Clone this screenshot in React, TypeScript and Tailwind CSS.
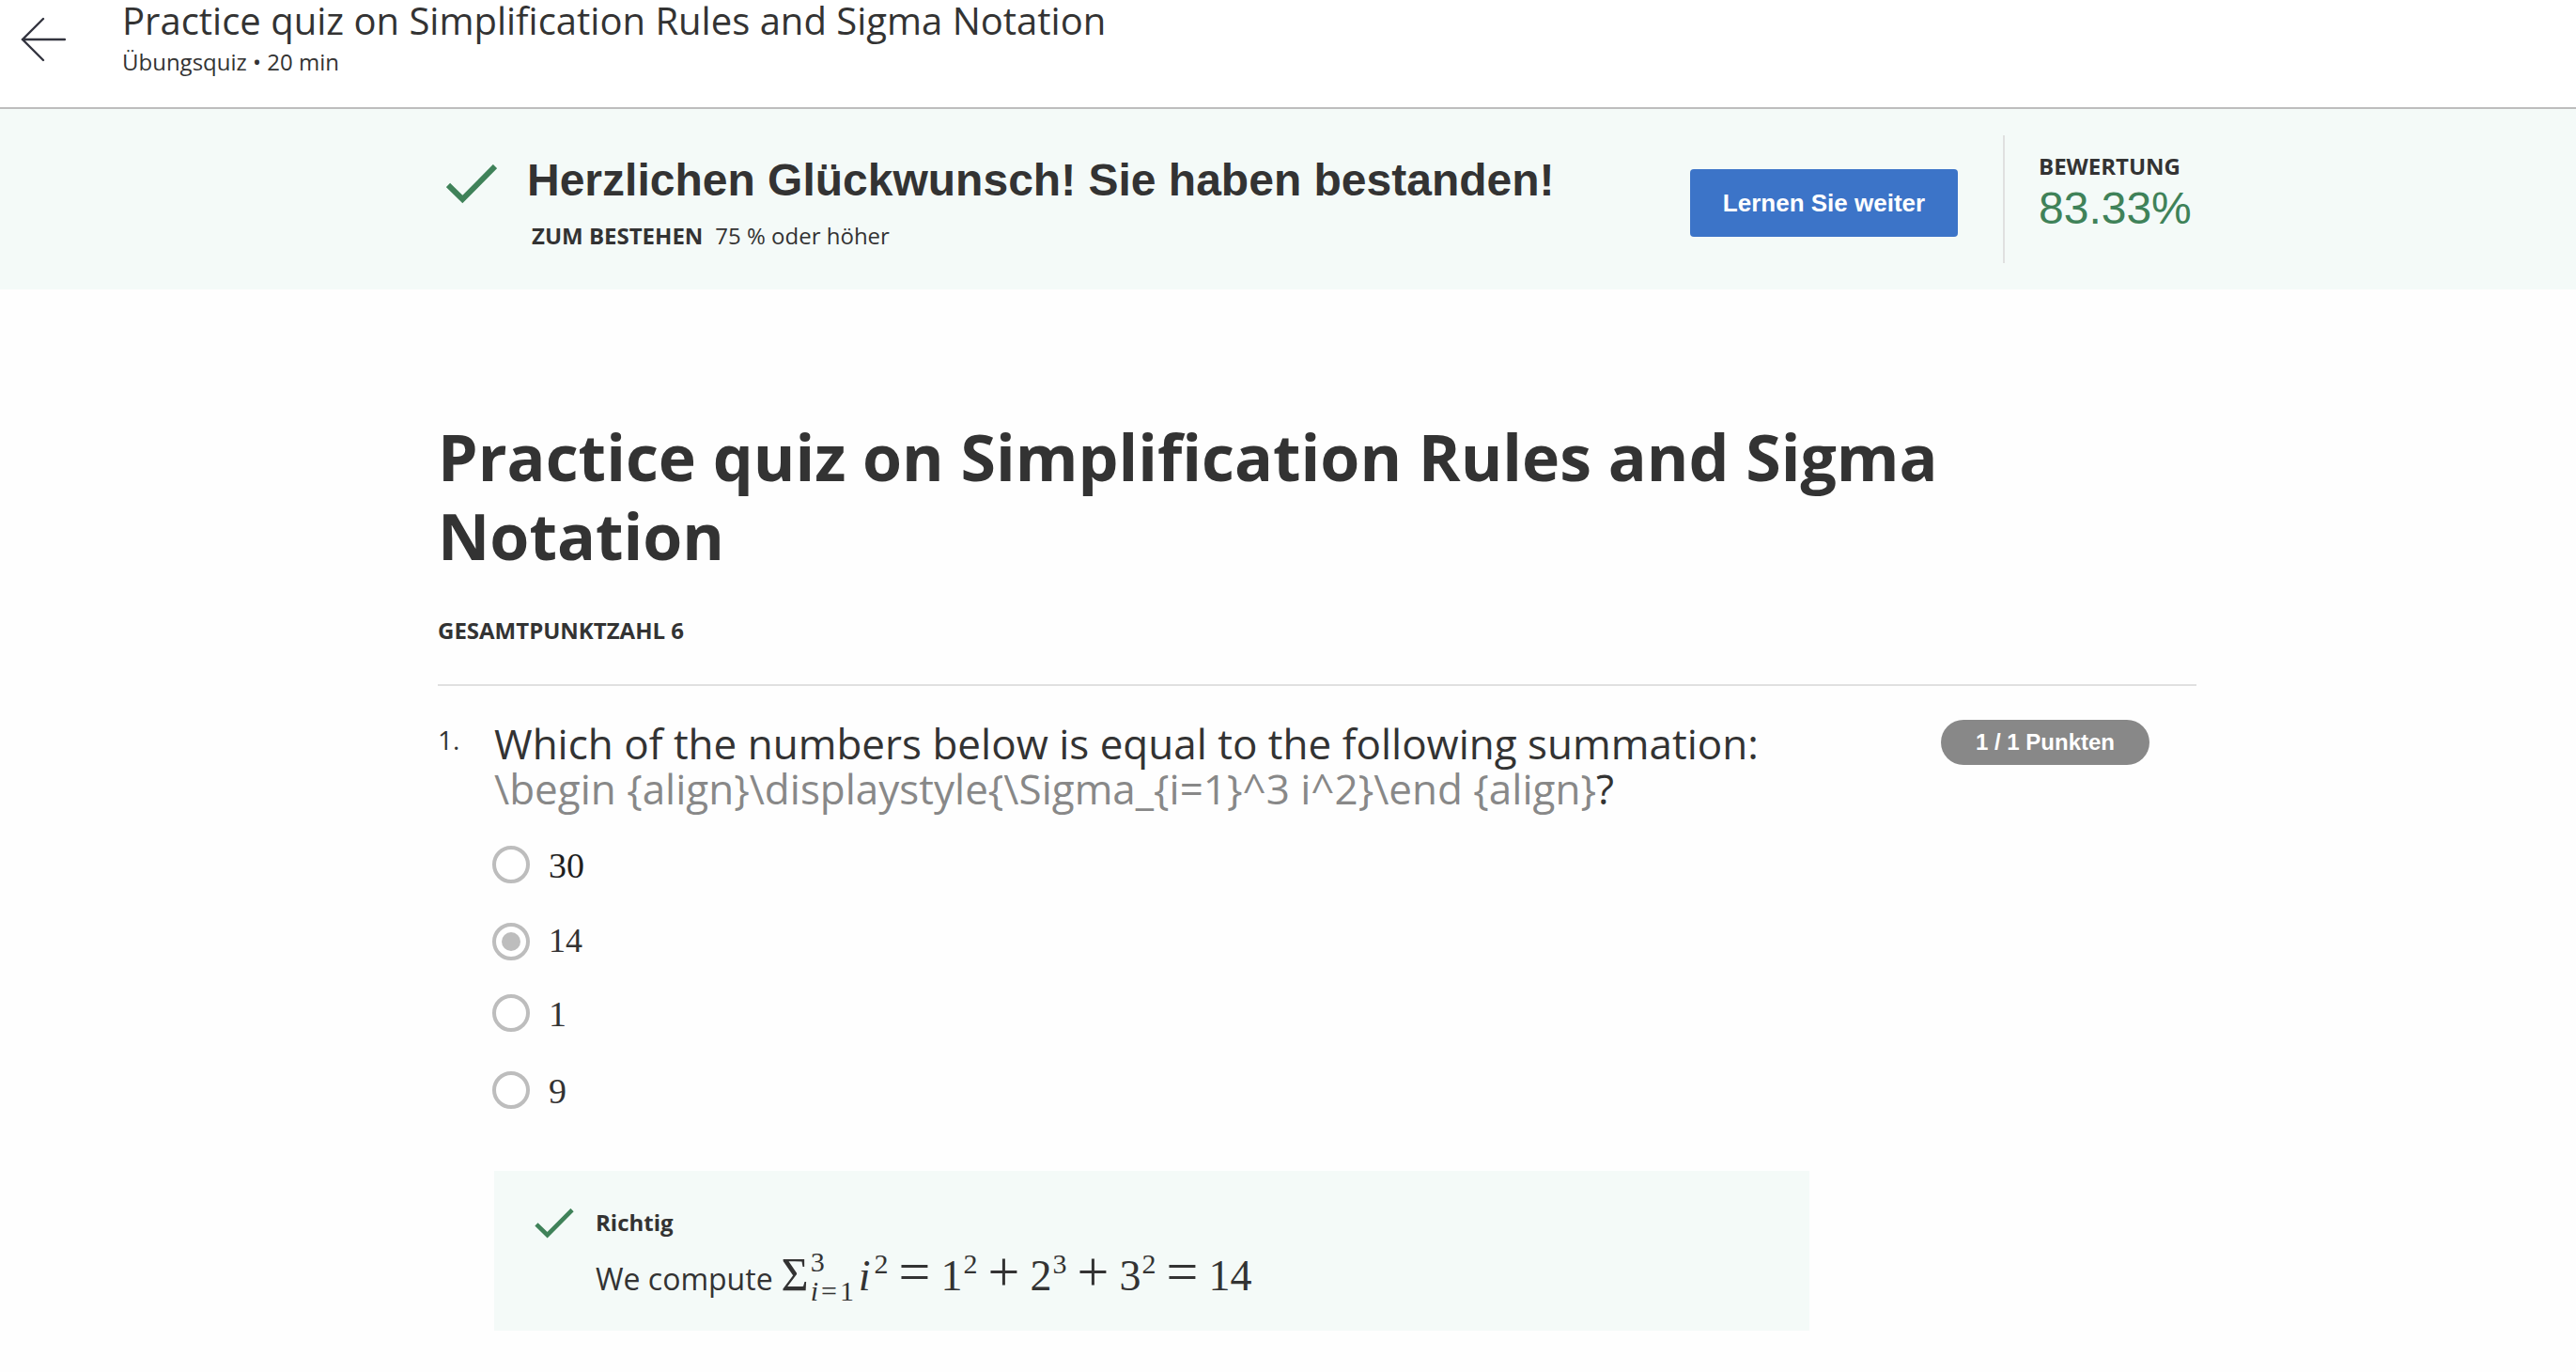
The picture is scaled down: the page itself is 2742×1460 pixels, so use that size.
import React from "react";

function Check({ className }: { className: string }) {
  return (
    <svg viewBox="0 0 54 42" className={className} fill="none" aria-hidden="true">
      <path d="M2 22 L17.3 37 L52 2" stroke="#3f8259" strokeWidth="6" />
    </svg>
  );
}

const options = [
  { value: "30", row: "h-[82px]", text: "text-[38px] leading-[42px] text-[#1f1f1f]" },
  { value: "14", row: "h-[76px]", text: "text-[36px] leading-[38px]" },
  { value: "1", row: "h-[82px]", text: "text-[38px] leading-[42px]" },
  { value: "9", row: "h-[82px]", text: "text-[38px] leading-[42px]" },
];

function Power({ base, exponent }: { base: string; exponent: string }) {
  return (
    <>
      {base}
      <span className="ml-px align-[18px] text-[30px] leading-none">{exponent}</span>
    </>
  );
}

function Operator({ sign }: { sign: string }) {
  return <span className="inline-block w-14 text-center text-[60px] leading-none">{sign}</span>;
}

function Formula() {
  return (
    <span className="ml-[9px] font-['Liberation_Serif',serif] text-[46px] leading-[48px]">
      <span className="text-[50px] leading-none">Σ</span>
      <span className="ml-0.5 inline-flex w-[51px] flex-col align-[20px] text-[30px] leading-[31px]">
        <span>3</span>
        <span>
          <i>i</i>
          <span className="px-[3px]">=</span>1
        </span>
      </span>
      <i className="mr-1">i</i>
      <span className="align-[18px] text-[30px] leading-none">2</span>
      <Operator sign="=" />
      <Power base="1" exponent="2" />
      <Operator sign="+" />
      <Power base="2" exponent="3" />
      <Operator sign="+" />
      <Power base="3" exponent="2" />
      <Operator sign="=" />
      14
    </span>
  );
}

export default function App() {
  return (
    <div className="min-h-screen bg-[#fefefe] font-['Open_Sans',sans-serif] text-[#333333]">
      <header className="flex h-[116px] border-b-2 border-[#bdbdbd] bg-white">
        <button aria-label="Zurück" className="flex w-[130px] items-start pt-[18px] pl-[22px]">
          <svg viewBox="0 0 48 48" className="h-12 w-12" fill="none" aria-hidden="true">
            <path d="M24 2 L2 24 L24 46 M2 24 H47" stroke="#33343f" strokeWidth="2.4" strokeLinecap="round" />
          </svg>
        </button>
        <div>
          <p className="text-[40px] leading-[44px]">Practice quiz on Simplification Rules and Sigma Notation</p>
          <p className="mt-1 text-[24px] leading-[36px]">Übungsquiz • 20 min</p>
        </div>
      </header>

      <section className="flex h-[192px] items-start bg-[#f4faf8] pr-[404px] pl-[475px]">
        <Check className="mt-[59px] h-[42px] w-[54px]" />
        <div className="ml-8 grow pt-[46px]">
          <h2 className="font-['Liberation_Sans',sans-serif] text-[48px] leading-[60px] font-bold whitespace-nowrap">
            Herzlichen Glückwunsch! Sie haben bestanden!
          </h2>
          <p className="mt-[11px] ml-[5px] text-[24px] leading-[36px]">
            <strong className="mr-[13px] font-bold">ZUM BESTEHEN</strong>75 % oder höher
          </p>
        </div>
        <button className="mt-16 h-[72px] w-[285px] rounded bg-[#3c74c8] font-['Liberation_Sans',sans-serif] text-[26px] font-bold text-white">
          Lernen Sie weiter
        </button>
        <div className="mt-7 ml-12 h-[136px] w-[206px] border-l-2 border-[#e0e0e0] pt-[15px] pl-9">
          <p className="text-[24px] leading-[36px] font-bold">BEWERTUNG</p>
          <p className="font-['Liberation_Sans',sans-serif] text-[48px] leading-[54px] text-[#3f8259]">83.33%</p>
        </div>
      </section>

      <main className="pr-[404px] pl-[466px]">
        <h1 className="max-w-[1640px] pt-[136px] text-[68px] leading-[84px] font-bold">
          Practice quiz on Simplification Rules and Sigma Notation
        </h1>
        <p className="mt-[41px] text-[24px] leading-[36px] font-bold">GESAMTPUNKTZAHL 6</p>
        <div className="mt-[39px] grid grid-cols-[60px_1400px_1fr] border-t-2 border-[#e0e0e0] pt-9">
          <span className="pt-[3px] text-[28px] leading-[36px]">1.</span>
          <div className="pt-px">
            <p className="text-[44px] leading-[48px]">
              Which of the numbers below is equal to the following summation:
              <br />
              <span className="text-[#888888]">{"\\begin {align}\\displaystyle{\\Sigma_{i=1}^3 i^2}\\end {align}"}</span>?
            </p>
            <div className="-ml-0.5 pt-[37px]">
              {options.map((o) => (
                <label key={o.value} className={"flex items-start gap-5 " + o.row}>
                  <input
                    type="radio"
                    name="answer"
                    defaultChecked={o.value === "14"}
                    className="grid size-10 appearance-none place-items-center rounded-full border-4 border-[#bdbdbd] bg-white before:size-5 before:rounded-full checked:before:bg-[#bdbdbd]"
                  />
                  <span className={"font-['Liberation_Serif',serif] " + o.text}>{o.value}</span>
                </label>
              ))}
            </div>
          </div>
          <div className="flex justify-end pr-[50px]">
            <span className="h-12 w-[222px] rounded-full bg-[#888888] text-center font-['Liberation_Sans',sans-serif] text-[24px] leading-[48px] font-bold text-white">
              1 / 1 Punkten
            </span>
          </div>
          <div className="col-start-2 mt-6 flex h-[170px] items-start bg-[#f4faf8] pl-[43px]">
            <Check className="mt-10 h-8 w-[42px]" />
            <div className="ml-[23px] pt-[37px]">
              <p className="text-[24px] leading-[36px] font-bold">Richtig</p>
              <p className="mt-1 text-[32px] leading-[60px] whitespace-nowrap">
                We compute
                <Formula />
              </p>
            </div>
          </div>
        </div>
      </main>
    </div>
  );
}
